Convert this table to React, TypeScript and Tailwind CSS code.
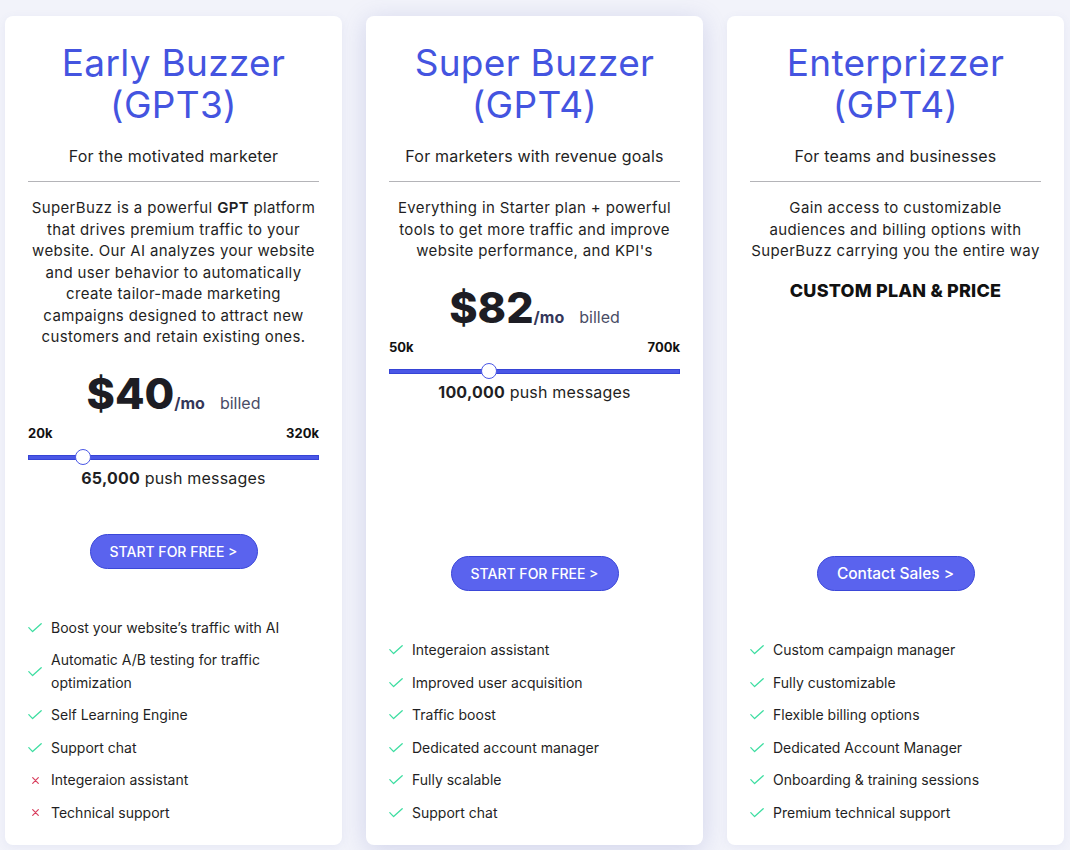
import * as React from 'react'

type Feature = { text: string; ok: boolean }

type Slider = { min: string; max: string; thumb: number; amount: string }

type Plan = {
  name: string
  model: string
  tagline: string
  description: React.ReactNode
  price?: string
  slider?: Slider
  custom?: boolean
  cta: string
  ctaClass: string
  featured?: boolean
  features: Feature[]
}

const plans: Plan[] = [
  {
    name: 'Early Buzzer',
    model: '(GPT3)',
    tagline: 'For the motivated marketer',
    description: (
      <>
        SuperBuzz is a powerful <b className="font-semibold">GPT</b> platform
        <br />
        that drives premium traffic to your
        <br />
        website. Our AI analyzes your website
        <br />
        and user behavior to automatically
        <br />
        create tailor-made marketing
        <br />
        campaigns designed to attract new
        <br />
        customers and retain existing ones.
      </>
    ),
    price: '$40',
    slider: { min: '20k', max: '320k', thumb: 54, amount: '65,000' },
    cta: 'START FOR FREE >',
    ctaClass: 'w-[168px] text-[14px]',
    features: [
      { text: 'Boost your website’s traffic with AI', ok: true },
      { text: 'Automatic A/B testing for traffic optimization', ok: true },
      { text: 'Self Learning Engine', ok: true },
      { text: 'Support chat', ok: true },
      { text: 'Integeraion assistant', ok: false },
      { text: 'Technical support', ok: false },
    ],
  },
  {
    name: 'Super Buzzer',
    model: '(GPT4)',
    tagline: 'For marketers with revenue goals',
    description: (
      <>
        Everything in Starter plan + powerful
        <br />
        tools to get more traffic and improve
        <br />
        website performance, and KPI's
      </>
    ),
    price: '$82',
    slider: { min: '50k', max: '700k', thumb: 99, amount: '100,000' },
    cta: 'START FOR FREE >',
    ctaClass: 'w-[168px] text-[14px]',
    featured: true,
    features: [
      { text: 'Integeraion assistant', ok: true },
      { text: 'Improved user acquisition', ok: true },
      { text: 'Traffic boost', ok: true },
      { text: 'Dedicated account manager', ok: true },
      { text: 'Fully scalable', ok: true },
      { text: 'Support chat', ok: true },
    ],
  },
  {
    name: 'Enterprizzer',
    model: '(GPT4)',
    tagline: 'For teams and businesses',
    description: (
      <>
        Gain access to customizable
        <br />
        audiences and billing options with
        <br />
        SuperBuzz carrying you the entire way
      </>
    ),
    custom: true,
    cta: 'Contact Sales >',
    ctaClass: 'w-[158px] text-[15.5px]',
    features: [
      { text: 'Custom campaign manager', ok: true },
      { text: 'Fully customizable', ok: true },
      { text: 'Flexible billing options', ok: true },
      { text: 'Dedicated Account Manager', ok: true },
      { text: 'Onboarding & training sessions', ok: true },
      { text: 'Premium technical support', ok: true },
    ],
  },
]

const CheckMark = () => (
  <svg width="14" height="10" viewBox="0 0 14 10" fill="none">
    <path d="M0.8 4.6 L4.6 8.6 L13.2 0.8" stroke="#3fdea2" strokeWidth="1.3" strokeLinecap="round" strokeLinejoin="round" />
  </svg>
)

const Cross = () => (
  <svg width="7" height="7" viewBox="0 0 7 7" fill="none">
    <path d="M0.7 0.7 L6.3 6.3 M6.3 0.7 L0.7 6.3" stroke="#d9405f" strokeWidth="1.2" strokeLinecap="round" />
  </svg>
)

const PlanCard = ({ plan }: { plan: Plan }) => {
  return (
    <div
      className={`flex flex-col justify-between w-[337px] h-[829px] bg-white rounded-lg px-[23px] pt-[26px] pb-[21px] ${
        plan.featured
          ? 'shadow-[0_4px_24px_rgba(90,100,180,0.22)]'
          : 'shadow-[0_2px_10px_rgba(90,100,180,0.08)]'
      }`}
    >
      <div className="flex flex-col items-center text-center">
        <h2 className="text-[37px] leading-[42px] text-[#4454e0] font-normal tracking-[0.3px]">
          {plan.name}
          <br />
          {plan.model}
        </h2>
        <p className="mt-[19px] text-[16px] leading-[22px] tracking-[0.2px] text-[#1f1f24]">{plan.tagline}</p>
        <div className="w-full h-px bg-[#b4b4b8] mt-[14px]" />
        <p className="mt-[15px] text-[15px] leading-[21.5px] tracking-[0.35px] text-[#1f1f24] whitespace-nowrap">
          {plan.description}
        </p>

        {plan.price && plan.slider && (
          <>
            <div className="mt-[21px] flex items-baseline">
              <span className="text-[43px] leading-[48px] font-extrabold text-[#1d1d24]">{plan.price}</span>
              <span className="text-[16px] font-bold text-[#34375a]">/mo</span>
              <span className="ml-[15px] text-[16px] text-[#4a4d66]">billed</span>
            </div>
            <div className="w-full mt-[7px] flex justify-between text-[13px] leading-[18px] font-bold text-[#111]">
              <span>{plan.slider.min}</span>
              <span>{plan.slider.max}</span>
            </div>
            <div className="relative w-full h-[5px] mt-[13px] bg-[#4a57e6] border border-[#3644d6]">
              <div
                className="absolute top-1/2 w-[16px] h-[16px] -ml-[8px] -mt-[8px] rounded-full bg-white border border-[#4a57e6]"
                style={{ left: plan.slider.thumb }}
              />
            </div>
            <p className="mt-[7px] text-[16px] leading-[22px] tracking-[0.2px] text-[#1f1f24]">
              <b className="font-bold">{plan.slider.amount}</b> push messages
            </p>
          </>
        )}

        {plan.custom && (
          <p className="mt-[17px] text-[18px] leading-[24px] font-extrabold tracking-[0.2px] text-[#111]">
            CUSTOM PLAN &amp; PRICE
          </p>
        )}
      </div>

      <div className="flex flex-col">
        <button
          className={`self-center h-[35px] rounded-full bg-[#5a63ee] border border-[#3b47d8] text-white font-medium ${plan.ctaClass}`}
        >
          {plan.cta}
        </button>
        <ul className="mt-[48px] flex flex-col gap-[10px]">
          {plan.features.map((f) => (
            <li key={f.text} className="flex items-center gap-[9px] text-[14px] leading-[22.5px] text-[#1f1f24]">
              <span className="w-[14px] flex justify-center shrink-0">{f.ok ? <CheckMark /> : <Cross />}</span>
              <span>{f.text}</span>
            </li>
          ))}
        </ul>
      </div>
    </div>
  )
}

export default function App() {
  return (
    <div
      className="w-[1070px] h-[850px] bg-[#f2f3fa] flex gap-[24px] px-[5px] pt-[16px] overflow-hidden"
      style={{ fontFamily: 'Inter, "Noto Sans", sans-serif' }}
    >
      {plans.map((p) => (
        <PlanCard key={p.name} plan={p} />
      ))}
    </div>
  )
}
